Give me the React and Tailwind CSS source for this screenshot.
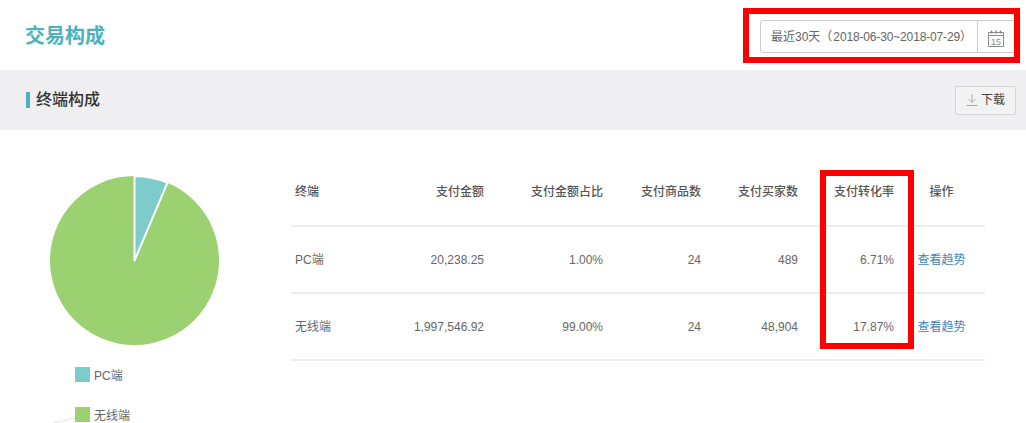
const font = { fontFamily: '"Liberation Sans", "Noto Sans CJK SC", sans-serif' };

const rows = [
  { name: "PC端", amount: "20,238.25", share: "1.00%", goods: "24", buyers: "489", rate: "6.71%" },
  { name: "无线端", amount: "1,997,546.92", share: "99.00%", goods: "24", buyers: "48,904", rate: "17.87%" },
];

function CalendarIcon() {
  return (
    <svg width="16" height="17" viewBox="0 0 16 17" fill="none" stroke="#888" strokeWidth="1">
      <path d="M0.500 2.500h15v14h-15z" />
      <path d="M0.500 5.500h15" />
      <path d="M3.500 0.500v3M8 0.500v3M12.500 0.500v3" strokeWidth="1.500" />
      <text x="8" y="14.500" textAnchor="middle" fontSize="9" fill="#888" stroke="none" fontFamily="Liberation Sans">15</text>
    </svg>
  );
}

function DownloadIcon() {
  return (
    <svg width="12" height="12" viewBox="0 0 12 12" fill="none" stroke="#aaa" strokeWidth="1">
      <path d="M6 0.500v8M2.500 5l3.500 3.500L9.500 5M0.500 11.500h11" />
    </svg>
  );
}

function Pie() {
  return (
    <svg width="170" height="170" viewBox="0 0 170 170">
      <circle cx="84.500" cy="84.500" r="84.500" fill="#9bd170" />
      <path d="M84.500 84.500V0A84.500 84.500 0 0 1 117.500 6.700Z" fill="#7ccccc" stroke="#fff" strokeWidth="2" strokeLinejoin="round" />
    </svg>
  );
}

function Legend({ color, label }) {
  return (
    <div className="flex items-center h-[15px] text-[12px] text-[#666]">
      <span className={`w-[15px] h-[15px] mr-[4px] ${color}`} />
      <span className="relative top-[1px]">{label}</span>
    </div>
  );
}

export default function App() {
  return (
    <div className="relative h-[423px] overflow-hidden bg-white" style={font}>
      <header className="flex items-center justify-between h-[70px] pl-[25px] pr-[10px]">
        <h1 className="text-[20px] font-bold text-[#4ab3bb] mt-[2px]">交易构成</h1>
        <div className="flex h-[33px] w-[256px] mt-[3px] border border-[#ccc] rounded-l-[3px] text-[12px] text-[#666]">
          <div className="flex items-center w-[217px] pl-[10px] border-r border-[#ccc] whitespace-nowrap">
            最近30天（<span className="tracking-[-0.15px] ml-[1px]">2018-06-30~2018-07-29</span>）
          </div>
          <div className="flex items-center pl-[10px] pt-[3px]">
            <CalendarIcon />
          </div>
        </div>
      </header>

      <div className="flex items-center justify-between h-[60px] pl-[26px] pr-[10px] bg-[#efeff1]">
        <div className="flex items-center">
          <span className="w-[4px] h-[16px] mr-[6px] bg-[#4ab3bb]" />
          <h2 className="text-[16px] font-medium text-[#333]">终端构成</h2>
        </div>
        <button className="flex items-center h-[29px] w-[61px] pl-[10px] border border-[#d5d5d5] rounded-[2px] bg-[#f3f3f4] text-[12px] text-[#444]">
          <DownloadIcon />
          <span className="ml-[3px]">下载</span>
        </button>
      </div>

      <div className="flex items-start pt-[29px]">
        <div className="w-[291px] shrink-0">
          <div className="pl-[50px] pt-[17px]">
            <Pie />
          </div>
          <div className="flex flex-col gap-[25px] pl-[75px] pt-[21px]">
            <Legend color="bg-[#7ccccc]" label="PC端" />
            <Legend color="bg-[#9bd170]" label="无线端" />
          </div>
        </div>

        <table className="w-[694px] table-fixed border-collapse text-[12px] text-[#666]">
          <colgroup>
            <col className="w-[97px]" />
            <col className="w-[100px]" />
            <col className="w-[119px]" />
            <col className="w-[98px]" />
            <col className="w-[97px]" />
            <col className="w-[96px]" />
            <col className="w-[87px]" />
          </colgroup>
          <thead>
            <tr className="h-[67px] border-b-2 border-[#eeeeee] text-[#555]">
              <th className="px-[4px] text-left font-medium">终端</th>
              <th className="px-[4px] text-right font-medium">支付金额</th>
              <th className="px-[4px] text-right font-medium">支付金额占比</th>
              <th className="px-[4px] text-right font-medium">支付商品数</th>
              <th className="px-[4px] text-right font-medium">支付买家数</th>
              <th className="px-[4px] text-right font-medium">支付转化率</th>
              <th className="text-center font-medium">操作</th>
            </tr>
          </thead>
          <tbody>
            {rows.map((r) => (
              <tr key={r.name} className="h-[67px] border-b-2 border-[#eeeeee]">
                <td className="px-[4px]">{r.name}</td>
                <td className="px-[4px] text-right">{r.amount}</td>
                <td className="px-[4px] text-right">{r.share}</td>
                <td className="px-[4px] text-right">{r.goods}</td>
                <td className="px-[4px] text-right">{r.buyers}</td>
                <td className="px-[4px] text-right">{r.rate}</td>
                <td className="text-center text-[#3d85c0]">查看趋势</td>
              </tr>
            ))}
          </tbody>
        </table>
      </div>

      {/* red marks drawn on top of the screenshot */}
      <div className="absolute left-[743px] top-[8px] w-[277px] h-[55px] border-[6px] border-[#fe0000]" />
      <div className="absolute left-[820px] top-[170px] w-[94px] h-[179px] border-[6px] border-[#fe0000]" />

      {/* leader line of the pie label, cut off by the window */}
      <svg className="absolute left-[53px] top-[416px]" width="22" height="7" viewBox="0 0 22 7">
        <path d="M0 7L22 2" stroke="#dcefcc" strokeWidth="1" fill="none" />
      </svg>
    </div>
  );
}
